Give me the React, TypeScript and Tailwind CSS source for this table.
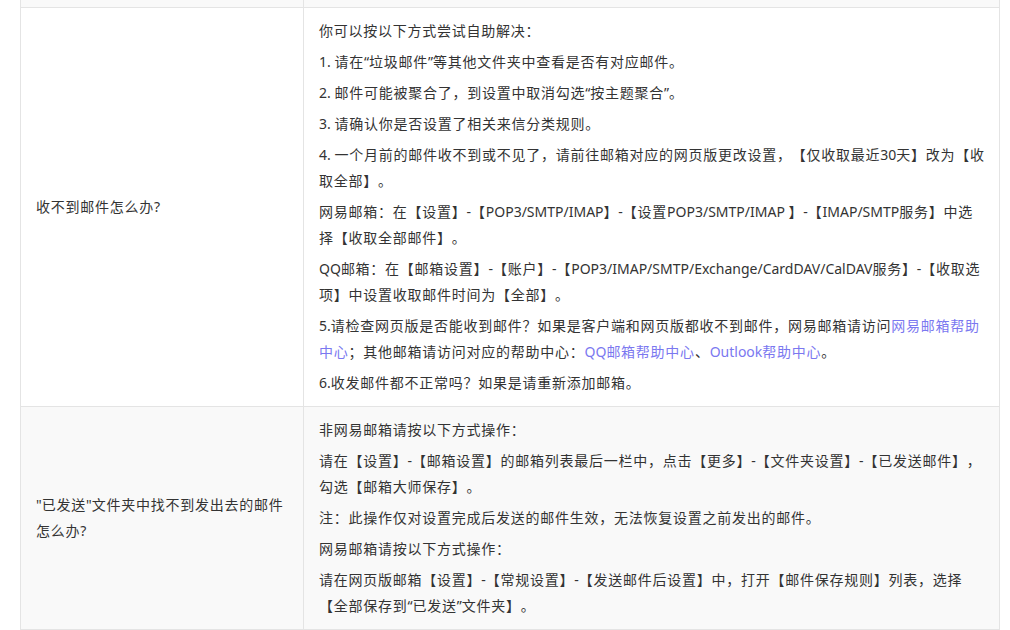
import React from "react";

type Part = string | { link: string };

type FaqRow = {
  question: string;
  answers: Part[][];
  shaded?: boolean;
};

// line breaks follow the original table's wrapping
const rows: FaqRow[] = [
  {
    question: "收不到邮件怎么办?",
    answers: [
      ["你可以按以下方式尝试自助解决："],
      ["1. 请在“垃圾邮件”等其他文件夹中查看是否有对应邮件。"],
      ["2. 邮件可能被聚合了，到设置中取消勾选“按主题聚合”。"],
      ["3. 请确认你是否设置了相关来信分类规则。"],
      [
        "4. 一个月前的邮件收不到或不见了，请前往邮箱对应的网页版更改设置，【仅收取最近30天】改为【收\n取全部】。",
      ],
      [
        "网易邮箱：在【设置】-【POP3/SMTP/IMAP】-【设置POP3/SMTP/IMAP 】-【IMAP/SMTP服务】中选\n择【收取全部邮件】。",
      ],
      [
        "QQ邮箱：在【邮箱设置】-【账户】-【POP3/IMAP/SMTP/Exchange/CardDAV/CalDAV服务】-【收取选\n项】中设置收取邮件时间为【全部】。",
      ],
      [
        "5.请检查网页版是否能收到邮件？如果是客户端和网页版都收不到邮件，网易邮箱请访问",
        { link: "网易邮箱帮助\n中心" },
        "；其他邮箱请访问对应的帮助中心：",
        { link: "QQ邮箱帮助中心" },
        "、",
        { link: "Outlook帮助中心" },
        "。",
      ],
      ["6.收发邮件都不正常吗？如果是请重新添加邮箱。"],
    ],
  },
  {
    question: "\"已发送\"文件夹中找不到发出去的邮件\n怎么办?",
    shaded: true,
    answers: [
      ["非网易邮箱请按以下方式操作："],
      [
        "请在【设置】-【邮箱设置】的邮箱列表最后一栏中，点击【更多】-【文件夹设置】-【已发送邮件】，\n勾选【邮箱大师保存】。",
      ],
      ["注：此操作仅对设置完成后发送的邮件生效，无法恢复设置之前发出的邮件。"],
      ["网易邮箱请按以下方式操作："],
      [
        "请在网页版邮箱【设置】-【常规设置】-【发送邮件后设置】中，打开【邮件保存规则】列表，选择\n【全部保存到“已发送”文件夹】。",
      ],
    ],
  },
];

// Chinese characters sit a little wider than the latin text in the original
const cjkRun = /([\u3000-\u303f\u4e00-\u9fff\uff00-\uffef]+)/;

function Text({ value }: { value: string }) {
  return (
    <>
      {value.split(cjkRun).map((chunk, i) =>
        i % 2 === 1 ? (
          <span key={i} className="tracking-[0.75px]">
            {chunk}
          </span>
        ) : (
          <React.Fragment key={i}>{chunk}</React.Fragment>
        ),
      )}
    </>
  );
}

function Answer({ parts }: { parts: Part[] }) {
  return (
    <p className="whitespace-pre">
      {parts.map((part, i) =>
        typeof part === "string" ? (
          <Text key={i} value={part} />
        ) : (
          <a key={i} href="#" className="text-[#7b78f0]">
            <Text value={part.link} />
          </a>
        ),
      )}
    </p>
  );
}

export default function App() {
  return (
    <div
      className="bg-white min-h-screen w-full text-[14px] leading-[26px] text-[#333333] [text-spacing-trim:space-all]"
      style={{ fontFamily: '"Noto Sans", "Noto Sans CJK SC", sans-serif' }}
    >
      <div className="ml-[20px] w-[980px] border-x border-[#e4e4e4]">
        {/* previous row, cut off at the top */}
        <div className="grid grid-cols-[283px_1fr] h-[8px] bg-[#f9f9f9] border-b border-[#e4e4e4]">
          <div className="border-r border-[#e4e4e4]" />
          <div />
        </div>

        {rows.map((row) => (
          <div
            key={row.question}
            className={`grid grid-cols-[283px_1fr] border-b border-[#e4e4e4] ${
              row.shaded ? "bg-[#f9f9f9]" : "bg-white"
            }`}
          >
            <div className="flex items-center px-[15px] border-r border-[#e4e4e4]">
              <p className="whitespace-pre">
                <Text value={row.question} />
              </p>
            </div>
            <div className="px-[15px] py-[10px] space-y-[5px]">
              {row.answers.map((parts, i) => (
                <Answer key={i} parts={parts} />
              ))}
            </div>
          </div>
        ))}

        {/* next row, cut off at the bottom */}
        <div className="grid grid-cols-[283px_1fr] h-[20px]">
          <div className="border-r border-[#e4e4e4]" />
          <div />
        </div>
      </div>
    </div>
  );
}
